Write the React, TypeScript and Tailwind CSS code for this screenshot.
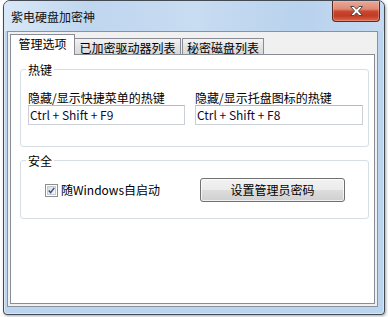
import React from "react";

const font = { fontFamily: '"Noto Sans CJK SC", "Liberation Sans", sans-serif' };

function CloseGlyph() {
  return (
    <svg width="15" height="12" viewBox="0 0 15 12">
      <path
        d="M1.5 1.5 H5 L7.5 4.2 L10 1.5 H13.5 L9.5 6 L13.5 10.5 H10 L7.5 7.8 L5 10.5 H1.5 L5.5 6 Z"
        fill="#ffffff"
        stroke="#4b4b4b"
        strokeWidth="1"
        strokeLinejoin="round"
      />
    </svg>
  );
}

function Check() {
  return (
    <div className="w-[13px] h-[13px] border border-[#8f8f8f] bg-white p-px">
      <div className="w-full h-full border border-[#c6cbd3] bg-[linear-gradient(135deg,#dcdcdc,#f8f8f8)] flex items-center justify-center">
        <svg width="9" height="9" viewBox="0 0 9 9">
          <path d="M1 4.6 L3.4 7.2 L8 1.2" fill="none" stroke="#2c4a8f" strokeWidth="1.8" />
        </svg>
      </div>
    </div>
  );
}

export default function App() {
  return (
    <div className="w-[388px] h-[317px] bg-white pl-[3px] text-[12px] leading-[14px] text-black" style={font}>
      <div className="w-[382px] h-[315px] flex flex-col rounded-t-[7px] rounded-b-[4px] border border-[#434a53] bg-[#bcd5ef] shadow-[1px_1px_3px_rgba(0,0,0,0.35),inset_0_0_0_1px_rgba(255,255,255,0.45)] overflow-hidden">
        {/* title bar */}
        <div className="h-[30px] flex items-start pl-[7px] pr-[4px] bg-[linear-gradient(to_right,#d9e8f7_0%,#bfd6ef_22%,#c8dcf2_50%,#b9d2ed_78%,#c4daf1_100%)]">
          <div className="pt-[9px] text-[#111]">紫电硬盘加密神</div>
          <div className="ml-auto w-[48px] h-[21px] rounded-b-[4px] border border-t-0 border-[#5d2a22] bg-[linear-gradient(to_bottom,#e9a898_0%,#df8a75_40%,#c9462f_52%,#c23b24_75%,#d86a50_100%)] shadow-[inset_0_0_0_1px_rgba(255,200,190,0.35)] flex items-center justify-center">
            <CloseGlyph />
          </div>
        </div>
        {/* client area */}
        <div className="ml-[3px] mr-[6px] mb-[7px] flex-1 border border-[#8a929c] bg-[#f0f0f0] p-px flex flex-col">
          {/* tab row */}
          <div className="h-[20px] mt-px ml-px flex items-end relative z-10">
            <div className="w-[65px] h-[21px] -mb-px border border-b-0 border-[#898c95] bg-white flex justify-center pt-[2px]">
              管理选项
            </div>
            <div className="w-[106px] h-[16px] border border-b-0 border-l-0 border-[#898c95] bg-[linear-gradient(to_bottom,#f3f3f3,#e4e4e4_50%,#d9d9d9)] flex justify-center pt-[2px]">
              已加密驱动器列表
            </div>
            <div className="ml-px w-[82px] h-[16px] border border-b-0 border-[#898c95] bg-[linear-gradient(to_bottom,#f3f3f3,#e4e4e4_50%,#d9d9d9)] flex justify-center pt-[2px]">
              秘密磁盘列表
            </div>
          </div>
          {/* panel */}
          <div className="mx-px flex-1 border border-[#898c95] bg-white flex flex-col">
            {/* hotkeys group */}
            <div className="ml-[9px] mt-[14px] w-[349px] h-[78px] border border-[#d5dfe5] rounded-[3px] flex flex-col">
              <div className="-mt-[7px] ml-[5px] px-[2px] w-fit bg-white">热键</div>
              <div className="mt-[14px] flex pl-[7px]">
                <div className="w-[157px] flex flex-col">
                  <div>隐藏/显示快捷菜单的热键</div>
                  <div className="h-[20px] border border-[#cbd0d8] border-t-[#b5b9c2] flex items-center pl-px text-[#0c0c30]">
                    Ctrl + Shift + F9
                  </div>
                </div>
                <div className="ml-[10px] w-[168px] flex flex-col">
                  <div>隐藏/显示托盘图标的热键</div>
                  <div className="h-[20px] border border-[#cbd0d8] border-t-[#b5b9c2] flex items-center pl-px text-[#0c0c30]">
                    Ctrl + Shift + F8
                  </div>
                </div>
              </div>
            </div>
            {/* security group */}
            <div className="ml-[9px] mt-[13px] w-[349px] h-[59px] border border-[#d5dfe5] rounded-[3px] flex flex-col">
              <div className="-mt-[7px] ml-[5px] px-[2px] w-fit bg-white">安全</div>
              <div className="mt-[10px] flex items-center pl-[24px] pr-[23px]">
                <Check />
                <div className="ml-[3px]">随Windows自启动</div>
                <div className="ml-auto w-[145px] h-[24px] rounded-[3px] border border-[#707070] bg-[linear-gradient(to_bottom,#f2f2f2_0%,#ebebeb_50%,#dddddd_51%,#cfcfcf_100%)] shadow-[inset_0_0_0_1px_rgba(255,255,255,0.7)] flex items-center justify-center">
                  设置管理员密码
                </div>
              </div>
            </div>
          </div>
          <div className="h-px" />
        </div>
      </div>
    </div>
  );
}
